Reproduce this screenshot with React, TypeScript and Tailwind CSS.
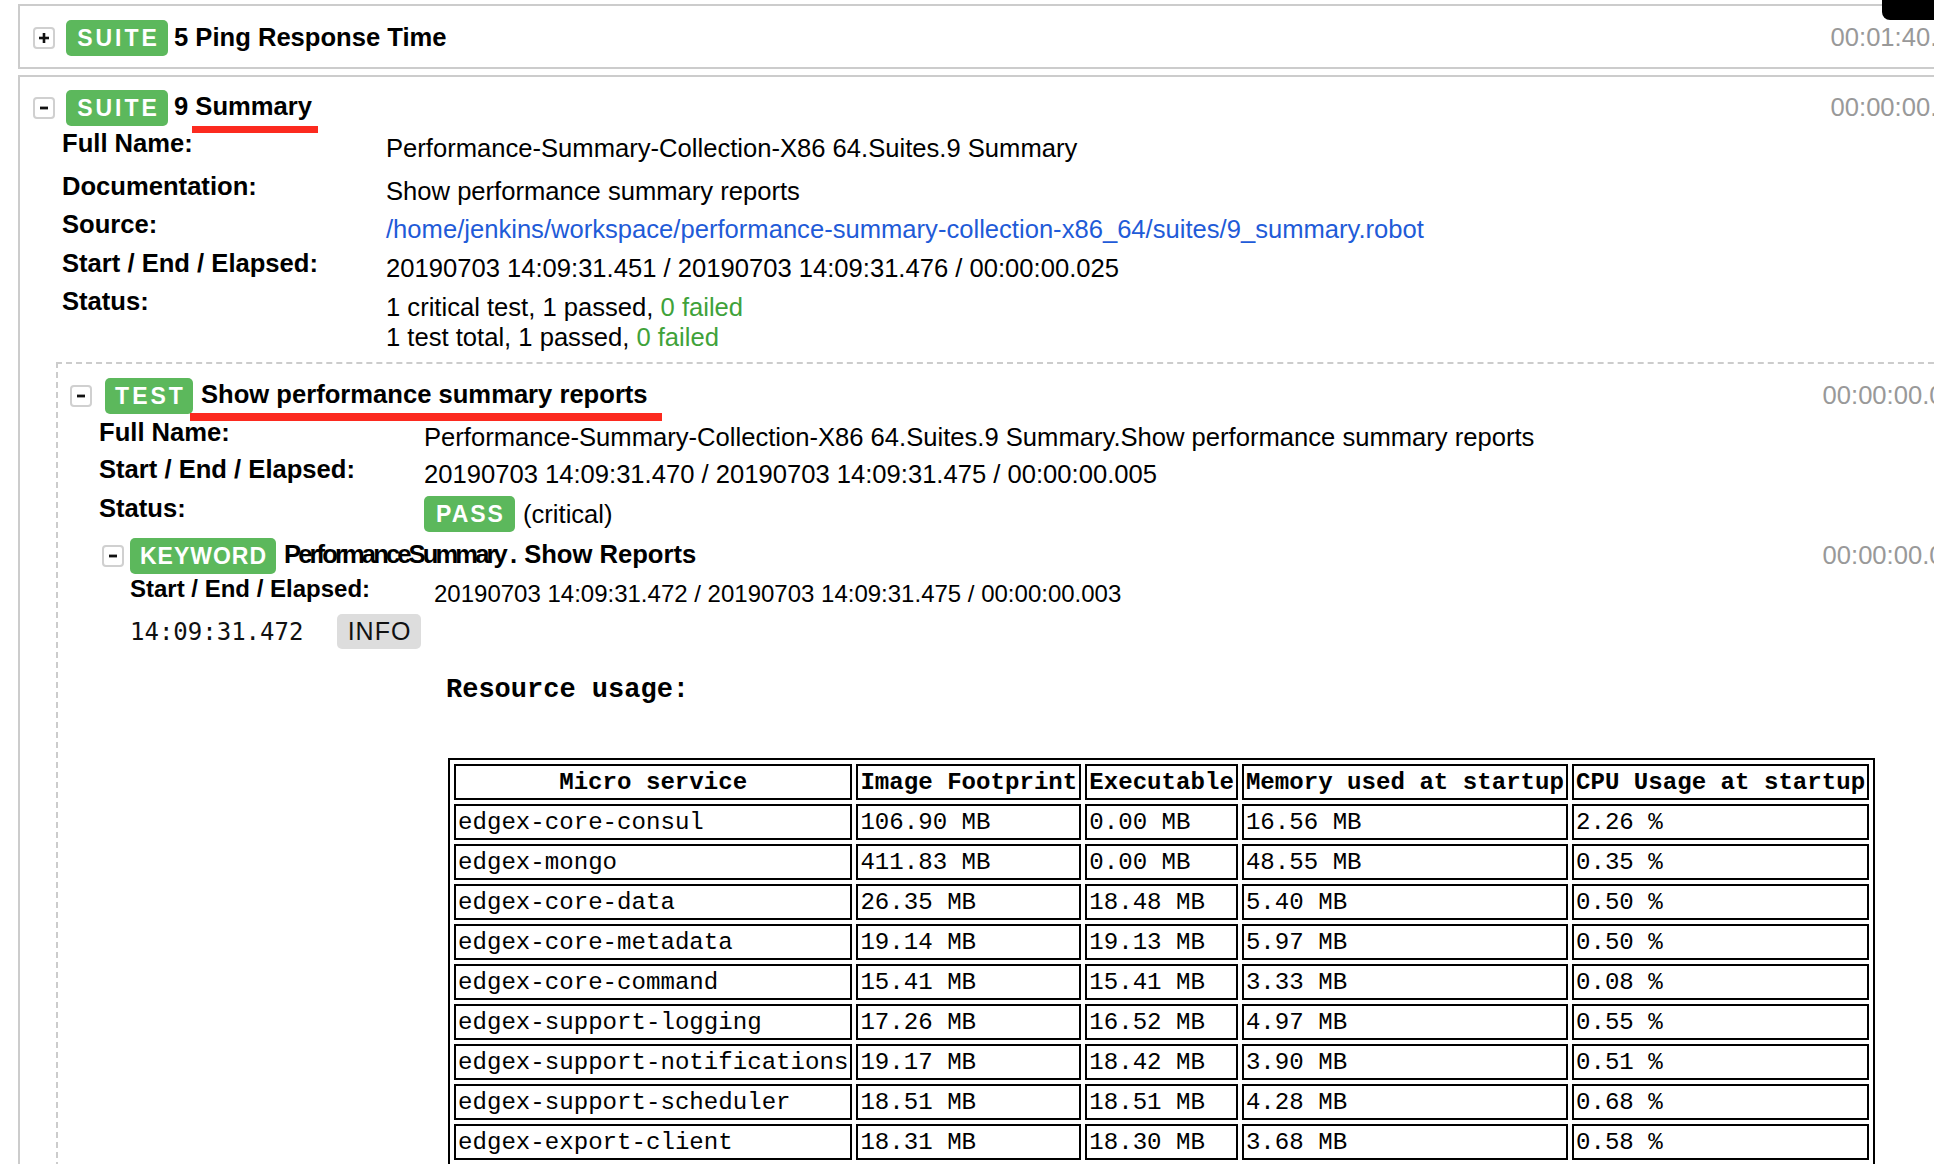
import React from "react";

function Toggle({ plus }: { plus?: boolean }) {
  return (
    <span className="flex h-[22px] w-[22px] shrink-0 items-center justify-center rounded-[4px] border-2 border-[#d0d0d0] bg-white">
      <svg width="12" height="12" viewBox="0 0 12 12">
        {plus ? (
          <>
            <rect x="1" y="4.7" width="10" height="2.6" fill="#111" />
            <rect x="4.7" y="1" width="2.6" height="10" fill="#111" />
          </>
        ) : (
          <rect x="2" y="4.6" width="8" height="2.8" fill="#111" />
        )}
      </svg>
    </span>
  );
}

function MetaRow({
  rowCls,
  labelCls,
  label,
  children,
}: {
  rowCls: string;
  labelCls: string;
  label: string;
  children: React.ReactNode;
}) {
  return (
    <div className={"flex " + rowCls}>
      <div className={"shrink-0 font-bold leading-[18px] whitespace-nowrap " + labelCls}>{label}</div>
      <div className="leading-[28px] whitespace-nowrap">{children}</div>
    </div>
  );
}

const rows: [string, string, string, string, string][] = [
  ["edgex-core-consul", "106.90 MB", "0.00 MB", "16.56 MB", "2.26 %"],
  ["edgex-mongo", "411.83 MB", "0.00 MB", "48.55 MB", "0.35 %"],
  ["edgex-core-data", "26.35 MB", "18.48 MB", "5.40 MB", "0.50 %"],
  ["edgex-core-metadata", "19.14 MB", "19.13 MB", "5.97 MB", "0.50 %"],
  ["edgex-core-command", "15.41 MB", "15.41 MB", "3.33 MB", "0.08 %"],
  ["edgex-support-logging", "17.26 MB", "16.52 MB", "4.97 MB", "0.55 %"],
  ["edgex-support-notifications", "19.17 MB", "18.42 MB", "3.90 MB", "0.51 %"],
  ["edgex-support-scheduler", "18.51 MB", "18.51 MB", "4.28 MB", "0.68 %"],
  ["edgex-export-client", "18.31 MB", "18.30 MB", "3.68 MB", "0.58 %"],
];

const headers = ["Micro service", "Image Footprint", "Executable", "Memory used at startup", "CPU Usage at startup"];

export default function App() {
  return (
    <div className="relative h-[1164px] w-[1934px] overflow-hidden bg-white text-[25.6px] text-black [font-family:'Liberation_Sans',Arial,Helvetica,sans-serif]">
      <div className="pl-[18px] pt-[4px]">
        {/* Suite 5 */}
        <div className="w-[1964px] border-2 border-[#cccccc] pb-[11px]">
          <div className="flex items-start pl-[13px] pt-[14px]">
            <div className="flex h-[36px] items-center">
              <Toggle plus />
            </div>
            <span className="ml-[11px] block h-[36px] w-[102px] shrink-0 rounded-[5px] bg-[#5cb85c] pl-[3px] text-center text-[23px] font-bold leading-[36px] tracking-[3px] text-white">
              SUITE
            </span>
            <span className="ml-[6px] mt-[3px] font-bold leading-[28px] whitespace-nowrap">5 Ping Response Time</span>
            <span className="ml-auto mt-[3px] shrink-0 leading-[28px] whitespace-nowrap text-[#999999]">00:01:40.620</span>
          </div>
        </div>

        {/* Suite 9 */}
        <div className="mt-[6px] w-[1964px] border-2 border-[#cccccc]">
          <div className="flex items-start pl-[13px] pt-[13px]">
            <div className="flex h-[36px] items-center">
              <Toggle />
            </div>
            <span className="ml-[11px] block h-[36px] w-[102px] shrink-0 rounded-[5px] bg-[#5cb85c] pl-[3px] text-center text-[23px] font-bold leading-[36px] tracking-[3px] text-white">
              SUITE
            </span>
            <span className="relative ml-[6px] mt-[2px] font-bold leading-[28px] whitespace-nowrap">
              9 Summary
              <span className="absolute left-[18px] top-[34px] h-[7px] w-[126px] bg-[#fc2a1f]" />
            </span>
            <span className="ml-auto mt-[3px] shrink-0 leading-[28px] whitespace-nowrap text-[#999999]">00:00:00.025</span>
          </div>

          <div className="mt-[8px] pl-[42px]">
            <MetaRow rowCls="h-[43px]" labelCls="w-[324px]" label="Full Name:">
              Performance-Summary-Collection-X86 64.Suites.9 Summary
            </MetaRow>
            <MetaRow rowCls="h-[38px]" labelCls="w-[324px]" label="Documentation:">
              Show performance summary reports
            </MetaRow>
            <MetaRow rowCls="h-[39px]" labelCls="w-[324px]" label="Source:">
              <a className="text-[#1f5bd8]">/home/jenkins/workspace/performance-summary-collection-x86_64/suites/9_summary.robot</a>
            </MetaRow>
            <MetaRow rowCls="h-[38px]" labelCls="w-[324px]" label="Start / End / Elapsed:">
              20190703 14:09:31.451 / 20190703 14:09:31.476 / 00:00:00.025
            </MetaRow>
            <div className="flex h-[58px]">
              <div className="w-[324px] shrink-0 font-bold leading-[18px]">Status:</div>
              <div className="leading-[30px] whitespace-nowrap">
                <div>
                  1 critical test, 1 passed, <span className="text-[#3fa23a]">0 failed</span>
                </div>
                <div>
                  1 test total, 1 passed, <span className="text-[#3fa23a]">0 failed</span>
                </div>
              </div>
            </div>
          </div>

          {/* Test */}
          <div className="ml-[36px] mr-[6px] mt-[12px] border-2 border-dashed border-[#cccccc]">
            <div className="flex items-start pl-[12px] pt-[14px]">
              <div className="flex h-[36px] items-center">
                <Toggle />
              </div>
              <span className="ml-[13px] block h-[36px] w-[88px] shrink-0 rounded-[5px] bg-[#5cb85c] pl-[3px] text-center text-[23px] font-bold leading-[36px] tracking-[3px] text-white">
                TEST
              </span>
              <span className="relative ml-[8px] mt-[2px] font-bold leading-[28px] whitespace-nowrap">
                Show performance summary reports
                <span className="absolute -left-[11px] top-[33px] h-[8px] w-[472px] bg-[#fc2a1f]" />
              </span>
              <span className="ml-auto mt-[3px] shrink-0 leading-[28px] whitespace-nowrap text-[#999999]">00:00:00.005</span>
            </div>

            <div className="mt-[9px] pl-[41px]">
              <MetaRow rowCls="h-[37px]" labelCls="w-[325px]" label="Full Name:">
                Performance-Summary-Collection-X86 64.Suites.9 Summary.Show performance summary reports
              </MetaRow>
              <MetaRow rowCls="h-[36px]" labelCls="w-[325px]" label="Start / End / Elapsed:">
                20190703 14:09:31.470 / 20190703 14:09:31.475 / 00:00:00.005
              </MetaRow>
              <div className="flex h-[36px]">
                <div className="w-[325px] shrink-0 pt-[3px] font-bold leading-[18px]">Status:</div>
                <div className="flex h-[36px] items-center">
                  <span className="block h-[36px] w-[91px] rounded-[5px] bg-[#5cb85c] pl-[2px] text-center text-[23px] font-bold leading-[36px] tracking-[2px] text-white">
                    PASS
                  </span>
                  <span className="ml-[8px] leading-[28px]">(critical)</span>
                </div>
              </div>
            </div>

            {/* Keyword */}
            <div className="mt-[6px] pl-[44px]">
              <div className="flex items-start">
                <div className="flex h-[36px] items-center">
                  <Toggle />
                </div>
                <span className="ml-[6px] block h-[36px] w-[146px] shrink-0 rounded-[5px] bg-[#5cb85c] pl-[1px] text-center text-[23px] font-bold leading-[36px] tracking-[1px] text-white">
                  KEYWORD
                </span>
                <span className="ml-[8px] mt-[2px] font-bold leading-[28px] whitespace-nowrap">
                  <span className="tracking-[-2.9px]">PerformanceSummary</span>
                  <span className="ml-[5px]">. Show Reports</span>
                </span>
                <span className="ml-auto mt-[3px] shrink-0 leading-[28px] whitespace-nowrap text-[#999999]">00:00:00.003</span>
              </div>

              <div className="mt-[6px] pl-[28px]">
                <div className="flex h-[34px] text-[24px]">
                  <div className="w-[304px] shrink-0 font-bold leading-[18px] whitespace-nowrap">Start / End / Elapsed:</div>
                  <div className="leading-[28px] whitespace-nowrap">
                    20190703 14:09:31.472 / 20190703 14:09:31.475 / 00:00:00.003
                  </div>
                </div>

                <div className="flex items-start">
                  <div className="flex h-[35px] w-[207px] shrink-0 items-center text-[24px] text-[#111] [font-family:'DejaVu_Sans_Mono',monospace]">
                    14:09:31.472
                  </div>
                  <span className="block h-[35px] w-[84px] shrink-0 rounded-[5px] bg-[#dddddd] pl-[1px] text-center text-[25px] leading-[35px] tracking-[1px] text-[#111]">
                    INFO
                  </span>
                  <div className="ml-[25px] pt-[60px] [font-family:'Liberation_Mono','Courier_New',monospace]">
                    <div className="text-[27px] font-bold leading-[32px]">Resource usage:</div>
                    <table className="ml-[2px] mt-[52px] border-separate border-spacing-[4px] border-2 border-black text-[24.1px]">
                      <thead>
                        <tr>
                          {headers.map((h) => (
                            <th
                              key={h}
                              className="border-2 border-black px-[2px] pb-[1px] pt-[3px] text-center font-bold leading-[28px] whitespace-nowrap"
                            >
                              {h}
                            </th>
                          ))}
                        </tr>
                      </thead>
                      <tbody>
                        {rows.map((r) => (
                          <tr key={r[0]}>
                            {r.map((c, i) => (
                              <td
                                key={i}
                                className="border-2 border-black px-[2px] pb-[1px] pt-[3px] text-left leading-[28px] whitespace-nowrap"
                              >
                                {c}
                              </td>
                            ))}
                          </tr>
                        ))}
                      </tbody>
                    </table>
                  </div>
                </div>
              </div>
            </div>
          </div>
        </div>
      </div>
      <div className="absolute right-0 top-0 z-10 h-[20px] w-[52px] rounded-bl-[8px] bg-black" />
    </div>
  );
}
